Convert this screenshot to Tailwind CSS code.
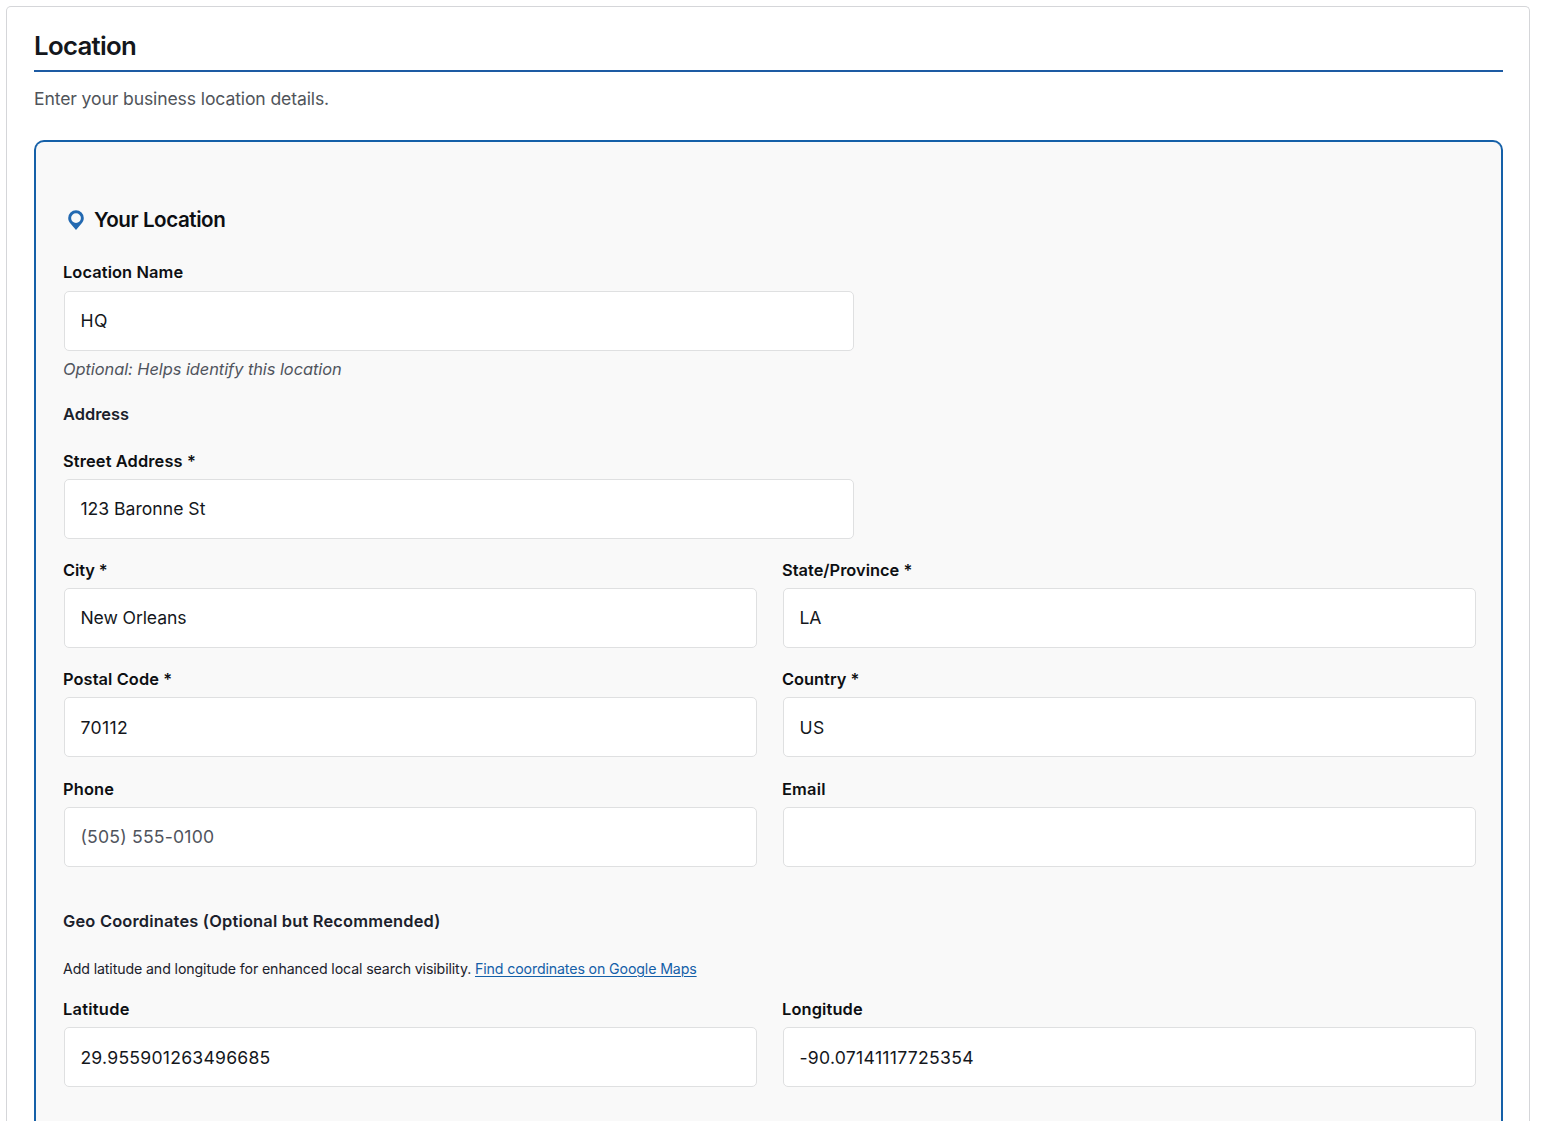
<!DOCTYPE html>
<html lang="en">
<head>
<meta charset="utf-8">
<title>Location</title>
<script src="https://cdn.jsdelivr.net/npm/@tailwindcss/browser@4"></script>
</head>
<body class="h-screen overflow-hidden bg-white pt-[6px] pl-[6px] font-['Inter',sans-serif]">
<main class="h-[1115px] w-[1524px] rounded-t-[5px] border border-b-0 border-[#d5d6d9] pr-[26px] pl-[27px]">
  <h1 class="mt-6 border-b-2 border-[#1d5ba3] pb-[9px] text-[25.8px] leading-[30px] font-semibold tracking-[-0.7px] text-[#14171c]">Location</h1>
  <p class="mt-[15px] text-[17.6px] leading-6 tracking-[-0.13px] text-[#50545a]">Enter your business location details.</p>

  <section class="mt-[29px] h-[981px] rounded-t-[10px] border-2 border-b-0 border-[#1560a8] bg-[#f9f9f9] px-[27px] pt-[64px]">
    <h2 class="flex h-[27px] items-center text-[20.6px] leading-[27px] font-semibold tracking-[-0.45px] text-[#0d0f12]">
      <svg class="mt-px mr-[10px] ml-[5px] h-5 w-4 shrink-0" viewBox="0 0 16 20" aria-hidden="true">
        <path fill="#2369b1" fill-rule="evenodd" d="M8 .3a7.800 7.800 0 0 1 7.800 7.800c0 2.400-1 4.400-2.900 6.100L8 20l-4.900-5.800C1.200 12.500.2 10.500.2 8.100A7.800 7.800 0 0 1 8 .3zM8 3.200a4.900 4.900 0 1 0 0 9.800a4.900 4.900 0 0 0 0-9.800z"/>
      </svg>
      Your Location
    </h2>

    <div class="mt-[27px] w-[791px]">
      <label for="name" class="block text-[16.4px] leading-6 font-semibold tracking-[0.1px] text-[#0d0f12]">Location Name</label>
      <input id="name" value="HQ" class="mt-[7px] ml-px block h-[60px] w-[790px] rounded-[5px] border border-[#dfe0e1] bg-white pr-4 pb-[1.5px] pl-[15.4px] text-[17.6px] tracking-[0.5px] text-[#14171c]">
      <p class="mt-[5.5px] text-[16.4px] leading-6 tracking-[-0.05px] text-[#50545d] italic">Optional: Helps identify this location</p>
    </div>

    <h3 class="mt-[21.5px] text-[16.4px] leading-[25px] font-semibold tracking-[0.02px] text-[#1b212b]">Address</h3>

    <div class="mt-[22px] w-[791px]">
      <label for="street" class="block text-[16.4px] leading-6 font-semibold tracking-[0.13px] text-[#0d0f12]">Street Address *</label>
      <input id="street" value="123 Baronne St" class="mt-1.5 ml-px block h-[60px] w-[790px] rounded-[5px] border border-[#dfe0e1] bg-white pr-4 pb-[1.5px] pl-[15.4px] text-[17.6px] text-[#14171c]">
    </div>

    <div class="mt-[19px] grid w-[1413px] grid-cols-[694px_694px] gap-x-[25px] gap-y-[19px]">
      <div>
        <label for="city" class="block text-[16.4px] leading-6 font-semibold tracking-[-0.1px] text-[#0d0f12]">City *</label>
        <input id="city" value="New Orleans" class="mt-1.5 ml-px block h-[60px] w-[693px] rounded-[5px] border border-[#dfe0e1] bg-white pr-4 pb-[1.5px] pl-[15.4px] text-[17.6px] tracking-[-0.1px] text-[#14171c]">
      </div>
      <div>
        <label for="state" class="block text-[16.4px] leading-6 font-semibold tracking-[0.02px] text-[#0d0f12]">State/Province *</label>
        <input id="state" value="LA" class="mt-1.5 ml-px block h-[60px] w-[693px] rounded-[5px] border border-[#dfe0e1] bg-white pr-4 pb-[1.5px] pl-[15.4px] text-[17.6px] text-[#14171c]">
      </div>
      <div>
        <label for="postal" class="block text-[16.4px] leading-6 font-semibold tracking-[0.08px] text-[#0d0f12]">Postal Code *</label>
        <input id="postal" value="70112" class="mt-1.5 ml-px block h-[60px] w-[693px] rounded-[5px] border border-[#dfe0e1] bg-white pr-4 pl-[15.4px] text-[17.6px] tracking-[0.4px] text-[#14171c]">
      </div>
      <div>
        <label for="country" class="block text-[16.4px] leading-6 font-semibold text-[#0d0f12]">Country *</label>
        <input id="country" value="US" class="mt-1.5 ml-px block h-[60px] w-[693px] rounded-[5px] border border-[#dfe0e1] bg-white pr-4 pl-[15.4px] text-[17.6px] tracking-[0.5px] text-[#14171c]">
      </div>
      <div class="pt-px">
        <label for="phone" class="block text-[16.4px] leading-6 font-semibold tracking-[0.15px] text-[#0d0f12]">Phone</label>
        <input id="phone" placeholder="(505) 555-0100" class="mt-1.5 ml-px block h-[60px] w-[693px] rounded-[5px] border border-[#dfe0e1] bg-white pr-4 pb-[1.5px] pl-[15.4px] text-[17.6px] tracking-[0.22px] text-[#14171c] placeholder:text-[#50545d]">
      </div>
      <div class="pt-px">
        <label for="email" class="block text-[16.4px] leading-6 font-semibold tracking-[0.2px] text-[#0d0f12]">Email</label>
        <input id="email" class="mt-1.5 ml-px block h-[60px] w-[693px] rounded-[5px] border border-[#dfe0e1] bg-white px-4 text-[17.6px] text-[#14171c]">
      </div>
    </div>

    <h3 class="mt-[42px] text-[16.4px] leading-6 font-semibold tracking-[0.2px] text-[#1b212b]">Geo Coordinates (Optional but Recommended)</h3>
    <p class="mt-[24px] text-[14.2px] leading-6 tracking-[-0.122px] text-[#1b212b]">Add latitude and longitude for enhanced local search visibility. <a href="#" class="tracking-[-0.13px] text-[#1560a8] underline decoration-1 underline-offset-[2px]">Find coordinates on Google Maps</a></p>

    <div class="mt-4 grid w-[1413px] grid-cols-[694px_694px] gap-x-[25px]">
      <div>
        <label for="lat" class="block text-[16.4px] leading-6 font-semibold tracking-[0.26px] text-[#0d0f12]">Latitude</label>
        <input id="lat" value="29.955901263496685" class="mt-1.5 ml-px block h-[60px] w-[693px] rounded-[5px] border border-[#dfe0e1] bg-white pr-4 pl-[15.4px] text-[17.6px] tracking-[0.24px] text-[#14171c]">
      </div>
      <div>
        <label for="lng" class="block text-[16.4px] leading-6 font-semibold tracking-[0.14px] text-[#0d0f12]">Longitude</label>
        <input id="lng" value="-90.07141117725354" class="mt-1.5 ml-px block h-[60px] w-[693px] rounded-[5px] border border-[#dfe0e1] bg-white pr-4 pl-[15.4px] text-[17.6px] tracking-[0.29px] text-[#14171c]">
      </div>
    </div>
  </section>
</main>
</body>
</html>
